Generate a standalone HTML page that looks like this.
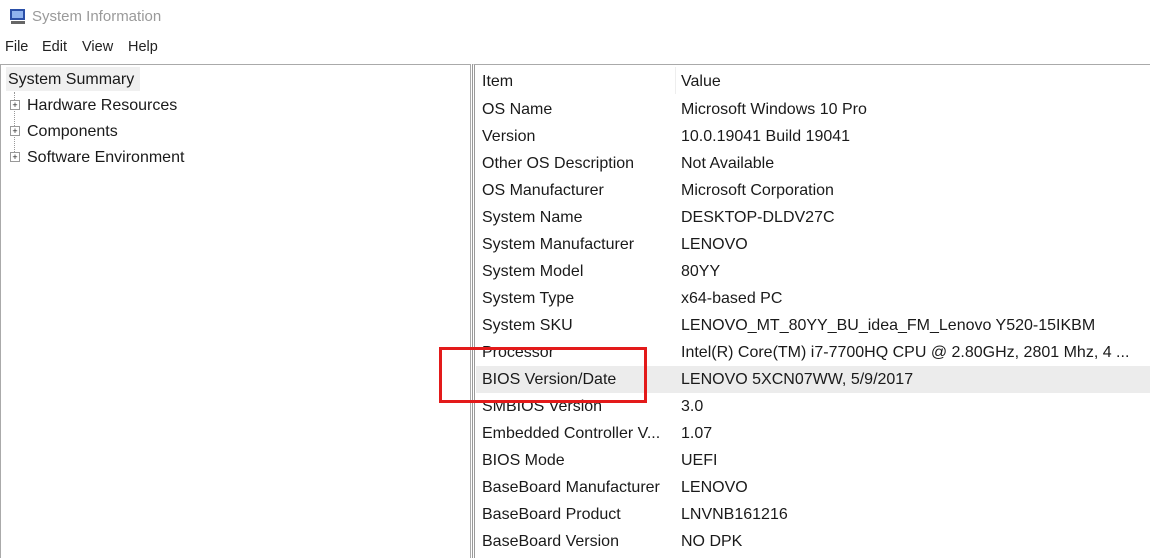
<!DOCTYPE html>
<html style="margin:0;height:558px;overflow:hidden"><head><style>
body{margin:0;width:1150px;height:558px;background:#fff;font-family:"Liberation Sans",sans-serif;color:#1a1a1a;position:relative;overflow:hidden;font-size:16px}
.a{position:absolute;white-space:nowrap}
.t{color:#9a9a9a;font-size:15px}
.m{font-size:14.5px;color:#222}
.r{position:absolute;left:482px;height:27px;line-height:27px;width:668px}
.r span{position:absolute;left:199px}
</style></head><body>
<svg class="a" style="left:8px;top:7px" width="20" height="20" viewBox="0 0 20 20"><rect x="2" y="2" width="15" height="11" fill="#2a4fa8"/><rect x="4" y="4" width="11" height="7" fill="#8fb3ef"/><rect x="3" y="14" width="14" height="3" fill="#666"/></svg>
<div class="a t" style="left:32px;top:8px">System Information</div>
<div class="a m" style="left:5px;top:39px">File</div>
<div class="a m" style="left:42px;top:39px">Edit</div>
<div class="a m" style="left:82px;top:39px">View</div>
<div class="a m" style="left:128px;top:39px">Help</div>
<div class="a" style="left:0;top:64px;width:469px;height:493px;border:1px solid #aaa;border-bottom:none"></div>
<div class="a" style="left:472px;top:64px;width:677px;height:493px;border-top:1px solid #aaa;border-left:3px double #999;border-right:none;border-bottom:none"></div>
<div class="a" style="left:6px;top:67px;width:134px;height:24px;background:#f0f0f0"></div>
<div class="a" style="left:8px;top:71px">System Summary</div>
<div class="a" style="left:14px;top:92px;height:68px;border-left:1px dotted #999"></div>
<div class="a" style="left:10px;top:100px;width:8px;height:8px;border:1px solid #999;background:#fff;font-size:9px;line-height:8px;text-align:center">+</div>
<div class="a" style="left:10px;top:126px;width:8px;height:8px;border:1px solid #999;background:#fff;font-size:9px;line-height:8px;text-align:center">+</div>
<div class="a" style="left:10px;top:152px;width:8px;height:8px;border:1px solid #999;background:#fff;font-size:9px;line-height:8px;text-align:center">+</div>
<div class="a" style="left:27px;top:97px">Hardware Resources</div>
<div class="a" style="left:27px;top:123px">Components</div>
<div class="a" style="left:27px;top:149px">Software Environment</div>
<div class="a" style="left:675px;top:67px;width:1px;height:27px;background:#eee"></div>
<div class="a" style="left:476px;top:366px;width:674px;height:27px;background:#ececec"></div>
<div class="r" style="top:68px">Item<span>Value</span></div>
<div class="r" style="top:96px">OS Name<span>Microsoft Windows 10 Pro</span></div>
<div class="r" style="top:123px">Version<span>10.0.19041 Build 19041</span></div>
<div class="r" style="top:150px">Other OS Description<span>Not Available</span></div>
<div class="r" style="top:177px">OS Manufacturer<span>Microsoft Corporation</span></div>
<div class="r" style="top:204px">System Name<span>DESKTOP-DLDV27C</span></div>
<div class="r" style="top:231px">System Manufacturer<span>LENOVO</span></div>
<div class="r" style="top:258px">System Model<span>80YY</span></div>
<div class="r" style="top:285px">System Type<span>x64-based PC</span></div>
<div class="r" style="top:312px">System SKU<span>LENOVO_MT_80YY_BU_idea_FM_Lenovo Y520-15IKBM</span></div>
<div class="r" style="top:339px">Processor<span>Intel(R) Core(TM) i7-7700HQ CPU @ 2.80GHz, 2801 Mhz, 4 ...</span></div>
<div class="r" style="top:366px">BIOS Version/Date<span>LENOVO 5XCN07WW, 5/9/2017</span></div>
<div class="r" style="top:393px">SMBIOS Version<span>3.0</span></div>
<div class="r" style="top:420px">Embedded Controller V...<span>1.07</span></div>
<div class="r" style="top:447px">BIOS Mode<span>UEFI</span></div>
<div class="r" style="top:474px">BaseBoard Manufacturer<span>LENOVO</span></div>
<div class="r" style="top:501px">BaseBoard Product<span>LNVNB161216</span></div>
<div class="r" style="top:528px">BaseBoard Version<span>NO DPK</span></div>
<div class="a" style="left:439px;top:347px;width:202px;height:50px;border:3px solid #e31a1a"></div>
</body></html>
